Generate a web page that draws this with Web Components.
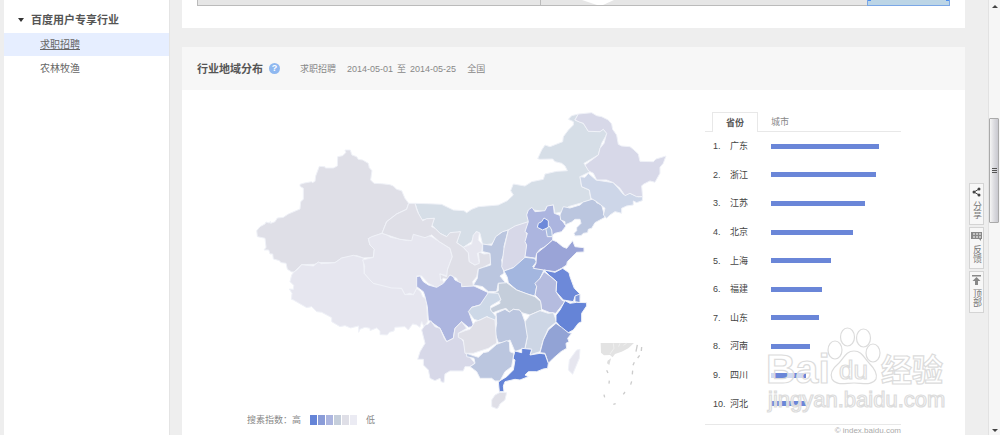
<!DOCTYPE html>
<html lang="zh-CN">
<head>
<meta charset="utf-8">
<title>行业地域分布</title>
<style>
body{margin:0;background:#eee;overflow:hidden;font-family:"Liberation Sans","Noto Sans CJK SC",sans-serif;font-size:9px;line-height:16px;color:#666}
</style>
</head>
<body>
<index-page></index-page>
<script>
const define = (name, html, setup) => customElements.define(name, class extends HTMLElement {
  constructor() {
    super();
    const t = document.createElement('template');
    t.innerHTML = html;
    this.attachShadow({mode: 'open'}).append(t.content.cloneNode(true));
  }
  connectedCallback() { if (setup) setup(this, this.shadowRoot); }
});

define('side-nav', `<style>
:host{display:block;background:#fff;padding-top:7px;box-sizing:border-box;border-right:1px solid #e4e4e4}
h2{margin:0;font-size:11px;line-height:26px;font-weight:bold;color:#555;display:flex;align-items:center;gap:7px;padding-left:14px}
h2::before{content:"";border:3px solid transparent;border-top:4px solid #333;border-bottom:0}
ul{margin:0;padding:0;list-style:none;display:grid;gap:1px}
a{display:block;padding-left:36px;font-size:10px;line-height:23px;color:#666;text-decoration:none}
a[aria-current]{background:#e6eeff;text-decoration:underline}
</style>
<h2>百度用户专享行业</h2>
<ul><li><a href="#job" aria-current="page">求职招聘</a></li><li><a href="#farm">农林牧渔</a></li></ul>`);

define('trend-slider', `<style>
:host{display:block;background:#fff;padding:0 15px 22px;overflow:hidden}
.track{display:flex;height:6px;box-sizing:border-box;background:#e6e6e6;border:solid #bbb;border-width:0 0 1px 1px;position:relative}
.half{width:45.5%;border-right:1px solid #bbb}
.notch{position:absolute;left:51%;top:0}
.range{margin-left:auto;width:11%;height:6px;box-sizing:border-box;background:#bcd5e6;border:1px solid #7ba7e6;border-top:0;display:flex;justify-content:space-between}
.range i{width:3px;height:1px;background:#4f8ff0}
</style>
<div class="track"><div class="half"></div>
<svg class="notch" width="32" height="6" viewBox="0 0 32 6"><path d="M0 0H32L21 5H15Z" fill="#fff"/></svg>
<div class="range"><i></i><i></i></div></div>`);

define('panel-head', `<style>
:host{display:flex;align-items:center;background:#f7f7f7;padding:0 15px;height:43px;color:#888}
h1{margin:0 6px 0 0;font-size:11px;line-height:16px;color:#555}
button{all:unset;width:11px;height:11px;border-radius:50%;background:#8fb8f0;color:#fff;font-weight:bold;font-size:9px;line-height:11px;text-align:center;margin-right:20px}
span{margin-right:11px}
.period{display:flex;gap:4px}
</style>
<h1><slot></slot></h1><button aria-label="帮助">?</button>
<span>求职招聘</span><span class="period"><time>2014-05-01</time> 至 <time>2014-05-25</time></span><span>全国</span>`);

/* Each layer has its own origin on the map; its outlines are in thirds of a pixel. */
const layers = [
 [400,170,[
  ['#d6dee7','45 100 85 101 125 103 160 120 192 122 200 128 215 118 235 110 295 105 322 92 340 75 332 62 340 42 375 48 395 35 430 28 435 12 470 4 502 2 495 -12 485 -20 465 -25 458 -33 420 -32 413 -34 425 -60 435 -75 450 -70 488 -85 490 -100 505 -120 520 -135 520 -145 505 -152 515 -163 535 -168 525 -150 550 -140 565 -117 610 -122 622 -110 605 -80 595 -45 552 -20 570 5 540 20 545 50 568 60 573 90 540 100 505 110 490 125 465 130 460 105 440 110 435 125 400 120 390 155 350 168 325 180 300 190 275 222 248 225 240 190 228 185 215 215 190 232 170 218 180 185 140 200 120 190 95 165 103 145 65 150 55 130'],
 ]],
 [250,140,[
  ['#dfdfe7','20 272 30 260 45 252 48 246 58 249 61 244 62 250 75 245 82 234 100 232 115 222 150 207 152 185 160 178 160 145 150 139 150 133 163 129 185 125 187 128 195 124 197 108 208 79 225 80 226 84 250 84 262 78 263 50 278 47 287 38 285 30 301 30 304 40 306 45 320 50 325 58 338 60 355 70 358 83 366 92 362 120 372 130 395 131 420 134 430 138 440 148 455 152 465 175 476 190 470 208 440 222 410 245 396 280 355 296 360 315 373 328 370 352 340 354 320 347 275 355 255 368 205 368 195 373 155 374 132 396 125 396 112 388 108 370 93 368 88 362 70 357 68 342 60 342 56 330 42 330 48 322 45 295 22 290'],
  ['#e6e6ef','132 396 143 388 155 374 190 378 205 366 215 371 255 368 275 354 310 346 340 354 343 400 370 430 455 445 465 464 490 464 500 445 512 455 518 470 526 475 530 490 533 545 522 560 515 545 510 562 500 555 488 552 475 570 465 560 435 562 432 573 418 577 412 585 390 584 390 573 380 564 360 572 360 565 345 562 330 568 326 577 326 558 302 564 285 557 270 560 245 545 245 533 215 517 200 515 185 500 170 503 130 480 124 478 126 460 118 447 130 448 131 436 120 425 125 405'],
  ['#e6e6ef','355 296 365 290 396 280 410 284 422 292 445 296 475 302 482 295 490 280 510 285 525 283 545 290 568 305 600 325 607 350 592 390 600 410 570 402 580 425 585 437 560 443 535 430 515 408 500 408 505 425 500 445 490 464 480 460 465 464 455 445 425 444 370 430 360 420 343 400 344 378 338 360 370 352 373 328 360 315']
 ]],
 [400,170,[
  ['#dfdfe7','26 100 45 100 50 118 55 130 68 152 80 146 103 145 95 170 105 175 120 190 140 200 150 188 182 185 170 218 190 232 205 248 208 275 225 285 238 275 235 245 252 252 270 250 273 280 250 292 235 297 230 320 218 335 222 358 180 350 170 325 155 318 150 330 130 325 122 332 120 312 140 320 142 300 157 260 150 235 118 215 95 195 75 203 40 193 35 212 0 208 -54 190 -40 155 -10 132 20 118'],
  ['#e6e6ef','190 232 215 222 220 195 230 185 238 188 235 210 248 225 245 245 232 250 238 280 225 285 208 275 205 248'],
  ['#bbc6df','248 222 275 226 287 200 308 185 325 180 312 230 315 245 305 270 312 310 300 318 318 340 295 340 290 365 265 365 248 350 220 345 232 325 235 297 250 292 272 285 270 250 248 245'],
  ['#d7d8e8','325 180 345 168 385 155 388 170 380 190 382 225 375 262 370 285 340 293 312 303 305 290 312 235']
 ]],
 [520,190,[
  ['#acb5df','25 60 36 52 45 65 75 62 82 48 100 45 103 70 125 78 127 93 138 108 125 125 105 130 98 135 98 150 75 170 60 178 50 190 47 205 15 200 20 165 15 155 22 130 15 125 25 95 20 75'],
  ['#6d89d9','55 100 65 95 72 84 85 92 85 112 68 120 52 112'],
  ['#acbfe0','78 118 88 108 95 120 97 140 82 140'],
  ['#bbc6df','120 75 130 50 150 54 180 45 190 36 225 25 230 38 245 45 255 82 240 90 225 98 215 115 205 118 203 128 190 130 183 137 165 138 162 130 170 122 170 113 183 100 180 88 165 88 155 96 135 105 135 95 122 90']
 ]],
 [530,100,[
  ['#cdd6e8','150 230 165 232 175 220 198 240 250 248 265 265 280 283 300 280 325 290 338 290 337 302 320 308 310 303 310 315 290 318 275 325 275 340 255 335 240 345 230 355 220 345 225 325 200 305 183 295 178 270 155 260'],
  ['#d7d8e8','145 42 185 38 200 47 215 50 235 60 245 72 248 88 260 105 265 133 275 138 300 140 310 148 325 162 330 184 370 185 378 177 408 168 400 190 390 202 390 220 375 247 360 243 340 253 335 258 338 290 320 290 300 280 285 287 270 265 250 248 230 240 200 240 190 220 176 213 165 195 205 165 210 145 222 130 230 100 220 88 210 95 175 94 160 70 148 66 135 60']
 ]],
 [480,280,[
  ['#a3b6df','72 -27 100 -37 135 -68 163 -65 170 -55 158 -40 192 -30 180 -5 170 20 165 48 140 42 110 30 85 8 82 -8'],
  ['#9aa4d7','170 -80 195 -100 218 -120 230 -115 248 -100 260 -95 278 -118 285 -100 312 -97 312 -84 290 -83 275 -68 262 -55 260 -45 245 -35 225 -25 190 -30 160 -35 168 -50'],
  ['#6d89d9','192 -30 225 -23 248 -35 267 -22 270 -10 283 25 300 42 300 55 285 50 280 65 250 60 228 35 230 5 210 -12'],
  ['#8299da','285 48 300 42 300 68 285 65'],
  ['#b5bcdf','192 -25 210 -12 230 5 228 35 245 60 255 65 235 90 228 100 210 98 185 88 180 60 165 45 170 20 165 10 180 -5'],
  ['#c5cedb','55 10 80 8 110 30 165 50 182 65 185 90 150 105 125 98 118 90 100 88 88 96 78 85 55 92 35 100 30 85 60 70 57 50 40 40 55 32'],
  ['#cdd6e5','150 105 180 92 205 100 220 98 230 125 205 145 190 180 180 215 150 225 155 208 135 205 142 170 135 155 135 125'],
  ['#bbc6df','48 100 75 88 88 96 100 88 118 90 125 98 135 125 142 170 135 205 118 210 105 215 90 180 75 188 55 188 45 160 50 130'],
  ['#6584d7','255 62 270 70 290 67 320 68 320 78 313 88 305 100 305 125 295 130 280 150 265 158 240 148 240 138 228 125 228 105 240 90'],
  ['#92a3d5','228 130 245 142 265 158 275 160 263 175 267 185 258 190 260 205 243 215 220 235 205 250 195 220 180 218 190 180 205 150'],
  ['#6584d7','125 205 155 208 150 225 180 220 195 222 205 250 203 265 190 267 170 275 145 275 135 285 145 290 120 300 105 298 75 305 70 318 72 335 58 335 55 305 80 290 100 270 105 240 98 235 105 213 125 218'],
  ['#dfdfe7','45 345 60 337 80 338 75 360 60 372 55 383 50 386 35 380 35 360'],
  ['#e6e6ef','290 210 300 208 298 235 278 283 265 270 268 240']
 ]],
 [400,270,[
  ['#acb5df','50 20 60 18 70 35 85 45 110 52 130 40 150 15 160 20 165 30 185 40 185 50 222 48 265 68 262 85 240 105 215 112 208 130 222 170 205 172 185 155 165 175 160 205 140 215 120 175 85 150 82 110 75 80 70 65 50 50'],
  ['#cdd8e7','265 68 295 70 303 90 272 108 272 120 288 140 285 160 262 140 235 152 222 148 205 125 215 112 240 105'],
  ['#d7d8e8','75 165 85 162 92 152 105 170 120 175 133 205 140 215 160 205 165 175 185 155 200 175 175 190 190 215 200 250 225 280 210 290 195 290 190 303 150 303 135 312 132 338 123 335 120 325 105 332 90 325 85 300 70 285 70 268 53 268 60 245 75 220 65 180'],
  ['#dfdfe7','175 190 195 182 210 178 225 155 240 150 260 140 285 150 290 220 280 225 265 235 220 250 195 250 190 210 175 202'],
  ['#bbc6df','200 250 235 262 250 248 265 245 290 223 320 212 328 215 330 245 342 250 335 290 315 305 300 333 285 333 275 325 240 325 230 305 210 290 225 280 222 265 200 260']
 ]]
];
define('china-map', `<style>
:host{display:block}
svg{display:block;width:100%;height:auto}
</style>
<svg viewBox="197 104 488 306" role="img" aria-label="全国搜索指数地图"><g id="map" stroke="#f0f2f8" stroke-width="3" stroke-linejoin="round"></g>
<g transform="translate(480 280) scale(.3333)"><path d="M362 189H462L445 205 425 215 405 222 398 232 390 225 372 226 363 218Z" fill="#e3e3e3"/><path d="M400 190 402 205 390 222M420 190 416 200M440 190 430 196" fill="none" stroke="#f5f5f5" stroke-width="2"/><path d="M383 242 393 235 388 255 381 250Z" fill="#ddd"/>
<path d="M472 195 468 215M485 201 484 213M479 226 473 234M463 247 459 256M458 272 457 283M455 304 452 314M435 336 430 343M407 371 400 373M372 344 374 352M388 302 387 311M380 271 384 279" stroke="#ccc" stroke-width="4" fill="none"/></g>
</svg>`, (el, root) => {
  root.getElementById('map').innerHTML = layers.map(([x, y, shapes]) =>
    `<g transform="translate(${x} ${y}) scale(.3333)">${shapes.map(([c, p]) => `<polygon fill="${c}" points="${p}"/>`).join('')}</g>`).join('');
});

define('map-legend', `<style>
:host{display:flex;align-items:center;gap:9px;color:#888;height:20px}
.scale{display:flex;gap:1px}
i{width:7px;height:10px;background:var(--c)}
</style>
<span>搜素指数：高</span>
<div class="scale"><i style="--c:#6584d7"></i><i style="--c:#8a9cd8"></i><i style="--c:#acb5df"></i><i style="--c:#c5cedb"></i><i style="--c:#dfdfe7"></i><i style="--c:#ebebf3"></i></div>
<span>低</span>`);

define('rank-list', `<style>
:host{display:block}
.tabs{display:flex;border-bottom:1px solid #e8e8e8;padding-left:7px;height:19px}
button{all:unset;box-sizing:border-box;line-height:18px;color:#888;padding:0 13px;height:20px}
button[aria-selected=true]{background:#fff;border:1px solid #e8e8e8;border-bottom:0;font-weight:bold;color:#555}
ol{list-style:none;margin:0;padding:0 0 6px 8px;display:grid;grid-auto-rows:1fr;min-height:286px;border-bottom:1px solid #e8e8e8}
li{display:grid;grid-template-columns:17px 41px 1fr;align-items:center;color:#444}
.bar{height:5px;background:#6a86d8;width:var(--w)}
p{margin:0;text-align:right;font-size:8px;line-height:12px;color:#aaa}
</style>
<div class="tabs" role="tablist"><button role="tab" aria-selected="true">省份</button><button role="tab" aria-selected="false">城市</button></div>
<ol></ol><p>© index.baidu.com</p>`, (el, root) => {
  root.querySelector('ol').innerHTML = [['广东',83],['浙江',81],['江苏',72],['北京',63],['上海',46],['福建',39],['山东',37],['河南',30],['四川',27],['河北',27]]
    .map(([n, w], i) => `<li><span>${i + 1}.</span><span>${n}</span><div class="bar" style="--w:${w}%"></div></li>`).join('');
});

define('brand-mark', `<style>
:host{display:block;pointer-events:none}
svg{display:block}
text{font-family:"Liberation Sans","Noto Sans CJK SC",sans-serif}
</style>
<svg width="190" height="90" viewBox="760 325 190 90" fill="#fff" fill-opacity=".7" stroke="#dcdcdc" stroke-width="1.2">
<text x="766" y="383" font-size="41" font-weight="bold">Bai</text>
<ellipse cx="835" cy="350" rx="7" ry="9"/><ellipse cx="847.5" cy="337" rx="7" ry="9"/><ellipse cx="863.5" cy="338" rx="7" ry="9"/><ellipse cx="873" cy="353" rx="7" ry="9"/>
<path d="M854 351C846 351 844 358 839 363C833 368 829 373 832 379C836 386 845 383 854 383C863 383 872 386 876 379C878 373 874 368 869 363C864 358 862 351 854 351Z"/>
<text x="839" y="379" font-size="26">du</text>
<text x="881" y="381" font-size="31" font-weight="bold">经验</text>
<text x="768" y="407" font-size="22">jingyan.baidu.com</text>
</svg>`);

define('tool-button', `<style>
:host{display:block}
button{all:unset;box-sizing:border-box;width:15px;height:42px;border:1px solid #d4d4d4;background:#f7f7f7;display:flex;flex-direction:column;align-items:center;gap:4px;padding-top:3px;color:#777}
span{writing-mode:vertical-rl;line-height:11px}
</style>
<button><slot name="icon"></slot><span><slot></slot></span></button>`);

define('page-scroll', `<style>
:host{display:flex;flex-direction:column;align-items:center;justify-content:space-between;background:#f6f6f6;border-left:1px solid #e2e2e2;box-sizing:border-box;padding:5px 0;position:relative}
i{border:3px solid transparent}
.up{border-bottom:3px solid #444;border-top:0}
.down{border-top:3px solid #444;border-bottom:0}
.thumb{position:absolute;top:27%;left:0;right:1px;height:24%;box-sizing:border-box;border:1px solid #aaa;border-radius:1px;background:linear-gradient(90deg,#f5f5f5,#dcdce0 50%,#c9c9d0);display:grid;place-content:center;gap:1px}
.thumb b{width:5px;height:1px;background:#555}
</style><i class="up"></i><div class="thumb"><b></b><b></b><b></b></div><i class="down"></i>`);

define('index-page', `<style>
:host{display:grid;grid-template-columns:166px 1fr 16px 15px;height:100vh;padding-left:4px;box-sizing:border-box;overflow:hidden}
main{margin:0 4px 0 12px;min-width:0}
panel-head{margin-top:19px}
.panel{background:#fff;display:flex;gap:20px;padding:14px 64px 0 15px;position:relative;min-height:calc(100vh - 104px)}
.map{flex:1;min-width:0}
map-legend{margin-left:50px}
rank-list{flex:0 0 196px;margin-top:8px}
brand-mark{position:absolute;right:15px;top:235px}
.tools{display:grid;gap:2px;align-content:start;padding-top:183px}
page-scroll{margin-left:3px}
svg{display:block}
</style>
<side-nav></side-nav>
<main>
<trend-slider></trend-slider>
<panel-head>行业地域分布</panel-head>
<section class="panel">
<div class="map"><china-map></china-map><map-legend></map-legend></div>
<rank-list></rank-list>
<brand-mark></brand-mark>
</section>
</main>
<div class="tools">
<tool-button><svg slot="icon" width="9" height="10" viewBox="0 0 9 10"><path d="M7 2 2 5 7 8" fill="none" stroke="#444"/><g fill="#444"><circle cx="7" cy="2" r="1.5"/><circle cx="2" cy="5" r="1.5"/><circle cx="7" cy="8" r="1.5"/></g></svg>分享</tool-button>
<tool-button><svg slot="icon" width="11" height="10" viewBox="0 0 11 10"><path d="M0 1H11V8H10V10L8 8H0Z" fill="#888"/><path d="M2 3H4M5 3H7M8 3H10M2 6H4M5 6H7M8 6H10" stroke="#fff"/></svg>反馈</tool-button>
<tool-button><svg slot="icon" width="9" height="10" viewBox="0 0 9 10"><path d="M0 0H9V1.5H0ZM4.5 2 8.5 6H6V10H3V6H.5Z" fill="#888"/></svg>顶部</tool-button>
</div>
<page-scroll></page-scroll>`);
</script>
</body>
</html>
